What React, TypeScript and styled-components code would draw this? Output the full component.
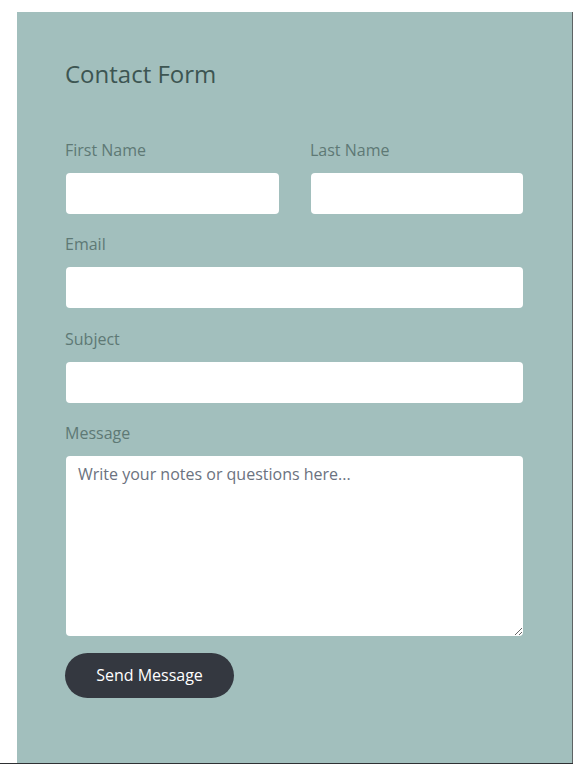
import React from "react";
import styled, { createGlobalStyle } from "styled-components";

const Global = createGlobalStyle`
  html, body { margin: 0; padding: 0; background: #ffffff; }
  body { font-family: "Open Sans", "Noto Sans", sans-serif; }
  * { box-sizing: border-box; }
`;

const Page = styled.div`
  height: 764px;
  padding: 12px 0 0 17px;
  border-bottom: 1px solid #2e3033;
  display: flex;
`;

const Panel = styled.form`
  width: 556px;
  background: #a2bfbd;
  border-right: 1px solid #5d6364;
  padding: 45.75px 48px 0 48px;
  display: flex;
  flex-direction: column;
`;

const Title = styled.h2`
  margin: 0 0 48px;
  font-size: 24px;
  line-height: 32px;
  font-weight: 400;
  color: #3d5552;
`;

const Row = styled.div`
  display: grid;
  grid-template-columns: 215px 1fr;
  column-gap: 30px;
`;

const Field = styled.div`
  display: flex;
  flex-direction: column;
  margin-bottom: 17.5px;
`;

const Label = styled.label`
  font-size: 16px;
  line-height: 24px;
  color: #5e7975;
  margin-bottom: 10px;
`;

const Input = styled.input`
  height: 43px;
  width: 100%;
  border: 1px solid transparent;
  background-clip: padding-box;
  border-radius: 5px;
  background-color: #ffffff;
  padding: 0 12px;
  font: inherit;
  font-size: 16px;
  outline: none;
`;

const TextArea = styled.textarea`
  height: 182px;
  width: 100%;
  border: 1px solid transparent;
  background-clip: padding-box;
  border-radius: 5px;
  background-color: #ffffff;
  padding: 6px 12px;
  font-family: "Open Sans", "Noto Sans", sans-serif;
  font-size: 16px;
  line-height: 24px;
  resize: vertical;
  outline: none;
  &::placeholder { color: #6b7280; opacity: 1; }
`;

const Button = styled.button`
  align-self: flex-start;
  margin-top: -2px;
  width: 169px;
  height: 45px;
  border: none;
  border-radius: 23px;
  background: #343840;
  color: #ffffff;
  font-family: "Open Sans", "Noto Sans", sans-serif;
  font-size: 16px;
  cursor: pointer;
`;

export default function App() {
  return (
    <>
      <Global />
      <Page>
        <Panel onSubmit={(e) => e.preventDefault()}>
          <Title>Contact Form</Title>
          <Row>
            <Field>
              <Label>First Name</Label>
              <Input type="text" />
            </Field>
            <Field>
              <Label>Last Name</Label>
              <Input type="text" />
            </Field>
          </Row>
          <Field>
            <Label>Email</Label>
            <Input type="email" />
          </Field>
          <Field>
            <Label>Subject</Label>
            <Input type="text" />
          </Field>
          <Field>
            <Label>Message</Label>
            <TextArea placeholder="Write your notes or questions here..." />
          </Field>
          <Button type="submit">Send Message</Button>
        </Panel>
      </Page>
    </>
  );
}
